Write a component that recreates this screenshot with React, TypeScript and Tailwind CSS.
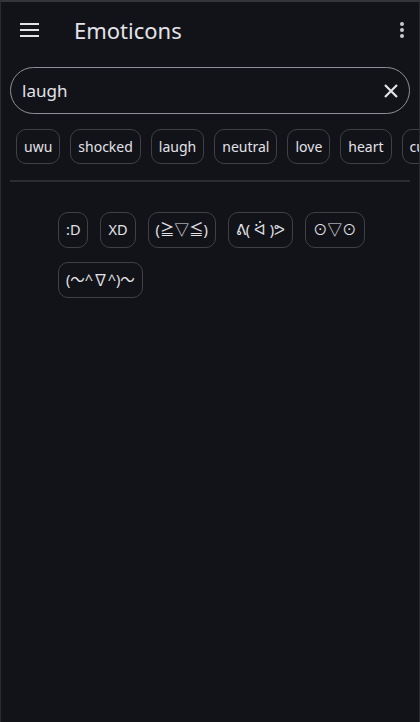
import React from "react";

const tags = ["uwu", "shocked", "laugh", "neutral", "love", "heart", "cute"];
const emoticons = [":D", "XD", "(≧▽≦)", "ᕕ( ᐛ )ᕗ", "⊙▽⊙", "(〜^∇^)〜"];

const App = () => {
  return (
    <div
      className="h-[722px] w-[420px] overflow-hidden border-x border-t-2 border-x-[#2a2b30] border-t-[#34353a] bg-[#121318] text-[#e3e2e9]"
      style={{ fontFamily: '"Noto Sans", "Noto Sans CJK JP", sans-serif' }}
    >
      {/* top bar */}
      <div className="flex h-[56px] items-center pl-[19px] pr-[14px]">
        <svg width="20" height="14" viewBox="0 0 20 14" className="shrink-0">
          <rect x="0" y="0" width="19" height="2" fill="#e3e2e9" />
          <rect x="0" y="6" width="19" height="2" fill="#e3e2e9" />
          <rect x="0" y="12" width="19" height="2" fill="#e3e2e9" />
        </svg>
        <h1 className="ml-[34px] text-[22px] leading-none">Emoticons</h1>
        <svg width="6" height="16" viewBox="0 0 6 16" className="ml-auto shrink-0">
          <circle cx="3" cy="2" r="2" fill="#c9c8d0" />
          <circle cx="3" cy="8" r="2" fill="#c9c8d0" />
          <circle cx="3" cy="14" r="2" fill="#c9c8d0" />
        </svg>
      </div>

      {/* search */}
      <div className="mx-[9px] mt-[9px] flex h-[47px] items-center rounded-full border border-[#8e9099] pl-[11px] pr-[10px]">
        <span className="text-[17px]">laugh</span>
        <svg width="16" height="16" viewBox="0 0 16 16" className="ml-auto">
          <path d="M2 2 L14 14 M14 2 L2 14" stroke="#e3e2e9" strokeWidth="2.2" />
        </svg>
      </div>

      {/* tag chips */}
      <div className="mt-[15px] flex gap-[10px] overflow-hidden pl-[15px]">
        {tags.map((t) => (
          <div
            key={t}
            className="flex h-[35px] shrink-0 items-center rounded-[10px] border border-[#3f4147] px-[7px] text-[14px] text-[#e3e2e9]"
          >
            {t}
          </div>
        ))}
      </div>

      <div className="mx-[9px] mt-[16px] h-[2px] bg-[#2c2d32]" />

      {/* results */}
      <div className="mt-[30px] flex flex-wrap gap-x-[12px] gap-y-[14px] pl-[57px] pr-[40px]">
        {emoticons.map((e) => (
          <div
            key={e}
            className="flex h-[36px] items-center rounded-[10px] border border-[#3f4147] px-[7px] text-[14.5px] whitespace-pre"
          >
            {e}
          </div>
        ))}
      </div>
    </div>
  );
};

export default App;
